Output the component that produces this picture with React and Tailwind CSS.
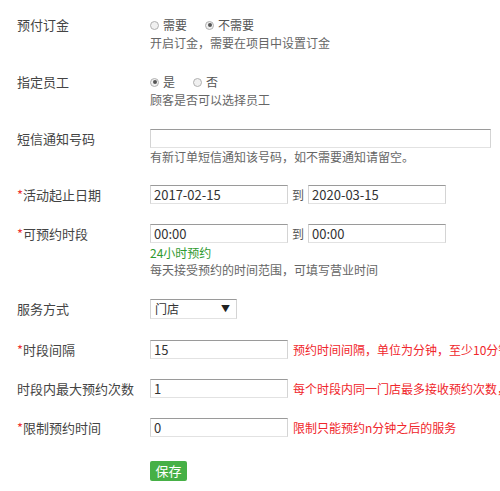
import React from 'react';

const FONT = { fontFamily: '"Microsoft YaHei", "Noto Sans CJK SC", "Liberation Sans", sans-serif' };

const inputCls =
  'h-[19px] border border-t-[#9a9a9a] border-x-[#d4d4d4] border-b-[#e2e2e2] bg-white px-[3px] text-[13px] leading-[17px] text-[#333] outline-none';

function Radio({ checked, label }) {
  return (
    <label className="flex items-center">
      <span className="flex h-[9px] w-[9px] items-center justify-center rounded-full border border-[#b0b0b0] bg-[#f0f0f0]">
        {checked && <span className="h-[4px] w-[4px] rounded-full bg-[#555]" />}
      </span>
      <span className="ml-[4px]">{label}</span>
    </label>
  );
}

function Row({ label, required, lh, mt = 'mt-[20px]', children }) {
  return (
    <div className={`flex items-start ${mt}`}>
      <div
        className={`ml-[17px] w-[133px] shrink-0 whitespace-nowrap text-[13px] text-[#444] ${lh}`}
      >
        {required && <span className="text-[#e33]">*</span>}
        {label}
      </div>
      <div className="min-w-0 flex-1">{children}</div>
    </div>
  );
}

const Hint = ({ children }) => (
  <div className="text-[12px] leading-[17px] text-[#666]">{children}</div>
);

const RedTip = ({ children }) => (
  <span className="ml-[5px] whitespace-nowrap text-[12px] leading-[19px] text-[#f0262b]">{children}</span>
);

export default function App() {
  return (
    <div className="h-[491px] w-[500px] overflow-hidden bg-white" style={FONT}>
      <Row label="预付订金" lh="leading-[18px]" mt="mt-[16px]">
        <div className="flex h-[18px] items-center gap-[18px] text-[12px] text-[#555]">
          <Radio label="需要" />
          <Radio checked label="不需要" />
        </div>
        <div className="text-[12px] leading-[18px] text-[#666]">开启订金，需要在项目中设置订金</div>
      </Row>

      <Row label="指定员工" lh="leading-[18px]" mt="mt-[21px]">
        <div className="flex h-[18px] items-center gap-[18px] text-[12px] text-[#555]">
          <Radio checked label="是" />
          <Radio label="否" />
        </div>
        <div className="text-[12px] leading-[18px] text-[#666]">顾客是否可以选择员工</div>
      </Row>

      <Row label="短信通知号码" lh="leading-[19px]">
        <input className={`${inputCls} block w-[341px]`} defaultValue="" />
        <Hint>有新订单短信通知该号码，如不需要通知请留空。</Hint>
      </Row>

      <Row label="活动起止日期" required lh="leading-[19px]">
        <div className="flex items-center">
          <input className={`${inputCls} w-[138px]`} defaultValue="2017-02-15" />
          <span className="mx-[4px] text-[12px] leading-[19px] text-[#555]">到</span>
          <input className={`${inputCls} w-[138px]`} defaultValue="2020-03-15" />
        </div>
      </Row>

      <Row label="可预约时段" required lh="leading-[19px]">
        <div className="flex items-center">
          <input className={`${inputCls} w-[138px]`} defaultValue="00:00" />
          <span className="mx-[4px] text-[12px] leading-[19px] text-[#555]">到</span>
          <input className={`${inputCls} w-[138px]`} defaultValue="00:00" />
        </div>
        <div className="mt-[1px] text-[12px] leading-[17px] text-[#2f9a2f]">24小时预约</div>
        <Hint>每天接受预约的时间范围，可填写营业时间</Hint>
      </Row>

      <Row label="服务方式" lh="leading-[20px]" mt="mt-[21px]">
        <div className="flex h-[20px] w-[87px] items-center justify-between border border-t-[#9a9a9a] border-x-[#d4d4d4] border-b-[#e2e2e2] pl-[4px] pr-[6px] text-[12px] text-[#333]">
          <span>门店</span>
          <span className="text-[9px] text-[#222]">▼</span>
        </div>
      </Row>

      <Row label="时段间隔" required lh="leading-[19px]" mt="mt-[21px]">
        <div className="flex items-center">
          <input className={`${inputCls} w-[138px] shrink-0`} defaultValue="15" />
          <RedTip>预约时间间隔，单位为分钟，至少10分钟</RedTip>
        </div>
      </Row>

      <Row label="时段内最大预约次数" lh="leading-[19px]">
        <div className="flex items-center">
          <input className={`${inputCls} w-[138px] shrink-0`} defaultValue="1" />
          <RedTip>每个时段内同一门店最多接收预约次数，超过则不能预约</RedTip>
        </div>
      </Row>

      <Row label="限制预约时间" required lh="leading-[19px]">
        <div className="flex items-center">
          <input className={`${inputCls} w-[138px] shrink-0`} defaultValue="0" />
          <RedTip>限制只能预约n分钟之后的服务</RedTip>
        </div>
      </Row>

      <div className="ml-[150px] mt-[20px]">
        <button className="h-[20px] w-[37px] rounded-[2px] bg-[#46b046] text-[13px] leading-[20px] text-white">
          保存
        </button>
      </div>
    </div>
  );
}
